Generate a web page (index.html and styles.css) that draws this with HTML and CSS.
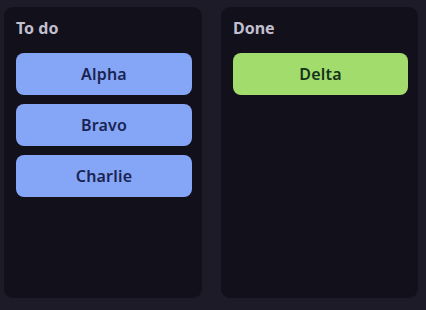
FILE: index.html
```html
<!DOCTYPE html>
<html>
<head>
<meta charset="UTF-8">
<title>Board</title>
<link rel="stylesheet" href="styles.css">
</head>
<body>
<div class="board">
<div class="column">
<h2>To do</h2>
<div class="card todo">Alpha</div>
<div class="card todo">Bravo</div>
<div class="card todo">Charlie</div>
</div>
<div class="column">
<h2>Done</h2>
<div class="card done">Delta</div>
</div>
</div>
</body>
</html>
```

FILE: styles.css
```css
html,body{
margin:0;
padding:0;
}
body{
background:#1c1b27;
font-family:"Noto Sans","Open Sans",sans-serif;
width:426px;
height:310px;
overflow:hidden;
}
.board{
display:grid;
grid-template-columns:198px 197px;
gap:19px;
padding:7px 8px 0 4px;
}
.column{
background:#12111b;
border-radius:9px;
height:291px;
padding:12px 10px 12px 12px;
box-sizing:border-box;
display:flex;
flex-direction:column;
gap:9px;
}
.column h2{
margin:-2px 0 5px;
font-size:16px;
font-weight:700;
color:#c2bfd0;
line-height:22px;
}
.card{
height:42px;
border-radius:8px;
display:flex;
align-items:center;
justify-content:center;
font-size:16px;
font-weight:600;
letter-spacing:0.2px;
}
.todo{
background:#85a6f6;
color:#1a2452;
}
.done{
background:#a2dc6d;
color:#15321a;
}
```
